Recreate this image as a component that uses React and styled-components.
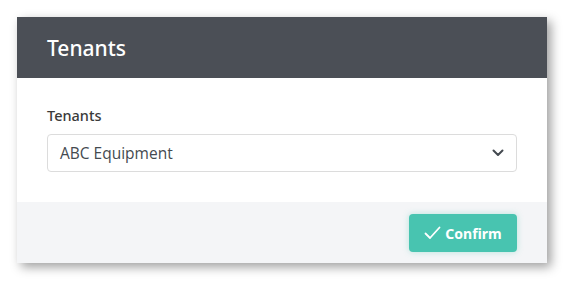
import React from 'react';
import styled, { createGlobalStyle } from 'styled-components';

const GlobalStyle = createGlobalStyle`
    body {
        margin: 0;
        background: #ffffff;
    }
`;

const Page = styled.div`
    padding: 17px 26px 27px 17px;
`;

const Dialog = styled.div`
    width: 530px;
    background: #ffffff;
    box-shadow: 4px 4px 10px rgba(0, 0, 0, 0.38);
`;

const Header = styled.div`
    height: 61px;
    background: #4b4f56;
    display: flex;
    align-items: center;
    padding: 0 30px;
`;

const Title = styled.h2`
    margin: 0;
    color: #ffffff;
    font-family: "Noto Sans", sans-serif;
    font-size: 21px;
    font-weight: 500;
`;

const Body = styled.div`
    padding: 27px 30px 30px;
    display: flex;
    flex-direction: column;
    gap: 9px;
`;

const Label = styled.label`
    font-family: "Noto Sans", sans-serif;
    font-size: 14.5px;
    font-weight: 500;
    line-height: 20px;
    color: #3a3a3a;
`;

const Select = styled.div`
    height: 38px;
    box-sizing: border-box;
    border: 1px solid #dcdcdc;
    border-radius: 4px;
    display: flex;
    align-items: center;
    justify-content: space-between;
    padding: 0 12px 0 12px;
    font-family: "Open Sans", sans-serif;
    font-size: 15.5px;
    color: #444a50;
`;

const Footer = styled.div`
    background: #f4f5f7;
    padding: 12px 30px 11px;
    display: flex;
    justify-content: flex-end;
`;

const Button = styled.button`
    height: 38px;
    width: 108px;
    border: none;
    border-radius: 4px;
    background: #48c4b0;
    box-shadow: 0 0 6px rgba(72, 196, 176, 0.35);
    color: #ffffff;
    font-family: "Noto Sans", sans-serif;
    font-size: 14px;
    font-weight: 700;
    display: flex;
    align-items: center;
    justify-content: center;
    gap: 4px;
    padding: 0;
`;

const Chevron = () => (
    <svg width="12" height="8" viewBox="0 0 12 8">
        <path d="M1.5 1.5 L6 6 L10.5 1.5" fill="none" stroke="#444a50" strokeWidth="2" strokeLinecap="round" strokeLinejoin="round" />
    </svg>
);

const Check = () => (
    <svg width="17" height="14" viewBox="0 0 17 14">
        <path d="M1.5 7.5 L6 12 L15.5 1.5" fill="none" stroke="#ffffff" strokeWidth="1.8" strokeLinecap="round" strokeLinejoin="round" />
    </svg>
);

const App = () => {
    return (
        <Page>
            <GlobalStyle />
            <Dialog>
                <Header>
                    <Title>Tenants</Title>
                </Header>
                <Body>
                    <Label>Tenants</Label>
                    <Select>
                        <span>ABC Equipment</span>
                        <Chevron />
                    </Select>
                </Body>
                <Footer>
                    <Button>
                        <Check />
                        Confirm
                    </Button>
                </Footer>
            </Dialog>
        </Page>
    );
};

export default App;
